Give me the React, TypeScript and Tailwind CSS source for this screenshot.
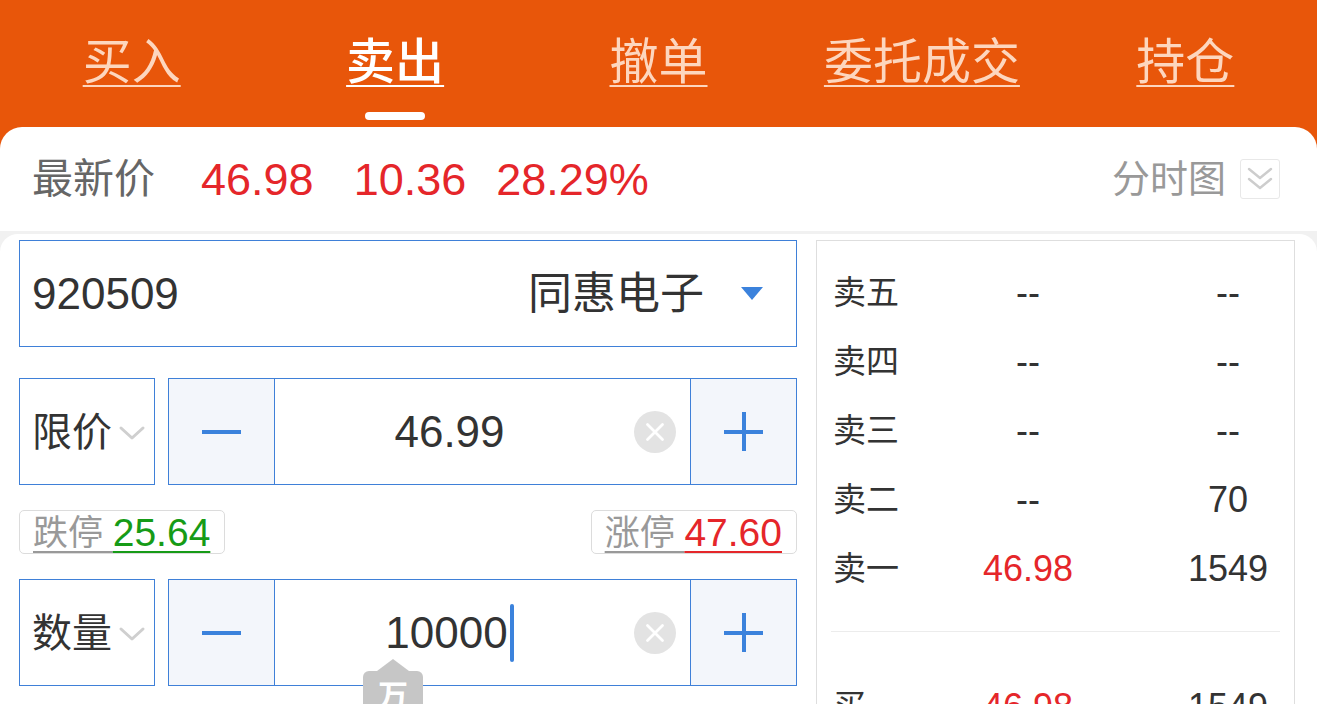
import React from "react";

const FONT = "font-['Liberation_Sans','Noto_Sans_CJK_SC',sans-serif]";

function Chevron() {
  return (
    <svg width="28" height="16" viewBox="0 0 28 16" className="shrink-0">
      <path d="M3 3 L14 13 L25 3" fill="none" stroke="#cfcfcf" strokeWidth="3" strokeLinecap="round" strokeLinejoin="round" />
    </svg>
  );
}

function ClearBtn() {
  return (
    <div className="w-[42px] h-[42px] rounded-full bg-[#e3e3e3] flex items-center justify-center shrink-0 ml-[10px] mr-[14px]">
      <svg width="22" height="22" viewBox="0 0 22 22">
        <path d="M3.5 3.5 L18.5 18.5 M18.5 3.5 L3.5 18.5" stroke="#ffffff" strokeWidth="2.8" strokeLinecap="round" />
      </svg>
    </div>
  );
}

function Stepper({ value, caret, tip }: { value: string; caret?: boolean; tip?: boolean }) {
  return (
    <div className="w-[629px] h-[107px] border border-[#3f80d8] flex relative">
      <div className="w-[106px] bg-[#f3f6fb] border-r border-[#3f80d8] flex items-center justify-center">
        <div className="w-[39px] h-[4px] bg-[#3b82dc]" />
      </div>
      <div className="flex-1 flex items-center relative">
        <div className="flex-1 flex items-center justify-center">
          <span className="text-[44px] text-[#333] leading-none">{value}</span>
          {caret && <div className="w-[4px] h-[58px] rounded-full bg-[#3b82dc] ml-[2px]" />}
        </div>
        <ClearBtn />
        {tip && (
          <div className="absolute left-[88px] top-[79px] w-[60px] flex flex-col items-center">
            <div className="w-0 h-0 border-l-[16px] border-r-[16px] border-b-[12px] border-l-transparent border-r-transparent border-b-[#c6c6c6]" />
            <div className="w-[60px] h-[60px] bg-[#c6c6c6] rounded-[6px] flex justify-center">
              <span className="text-[30px] text-white font-bold leading-none mt-[10px]">万</span>
            </div>
          </div>
        )}
      </div>
      <div className="w-[106px] bg-[#f3f6fb] border-l border-[#3f80d8] flex items-center justify-center">
        <div className="relative w-[39px] h-[39px]">
          <div className="absolute left-0 top-[17.5px] w-[39px] h-[4px] bg-[#3b82dc]" />
          <div className="absolute top-0 left-[17.5px] w-[4px] h-[39px] bg-[#3b82dc]" />
        </div>
      </div>
    </div>
  );
}

function SelectBox({ label }: { label: string }) {
  return (
    <div className="w-[136px] h-[107px] border border-[#3f80d8] flex items-center pl-[12px] pr-[6px]">
      <span className="text-[40px] text-[#333] leading-none">{label}</span>
      <span className="ml-[6px] mt-[2px]"><Chevron /></span>
    </div>
  );
}

function BookRow({ label, price, vol, red }: { label: string; price: string; vol: string; red?: boolean }) {
  return (
    <div className="h-[69px] flex items-center">
      <span className="w-[146px] pl-[16px] text-[33px] text-[#333] leading-none">{label}</span>
      <span className={`w-[130px] text-center text-[36px] leading-none ${red ? "text-[#e5262a]" : "text-[#333]"}`}>{price}</span>
      <span className="w-[130px] ml-[70px] text-center text-[36px] text-[#333] leading-none">{vol}</span>
    </div>
  );
}

export default function App() {
  const tabs = ["买入", "卖出", "撤单", "委托成交", "持仓"];
  return (
    <div className={`w-[1317px] h-[704px] overflow-hidden bg-[#f1f1f1] ${FONT}`}>
      <div className="bg-[#e8560a]">
        <div className="flex h-[127px]">
          {tabs.map((t, i) => (
            <div key={t} className="flex-1 flex flex-col items-center">
              <span
                className={`mt-[34px] text-[49px] leading-[56px] underline underline-offset-[6px] decoration-[2px] ${
                  i === 1 ? "text-white font-medium" : "text-[#fdd6be]"
                }`}
              >
                {t}
              </span>
              {i === 1 && <div className="mt-[22px] w-[60px] h-[8px] rounded-full bg-white" />}
            </div>
          ))}
        </div>
        <div className="bg-white rounded-t-[22px] h-[104px] flex items-center pl-[32px] pr-[37px]">
          <span className="text-[41px] text-[#666] leading-none">最新价</span>
          <span className="ml-[46px] text-[45px] text-[#e5262a] leading-none">46.98</span>
          <span className="ml-[40px] text-[45px] text-[#e5262a] leading-none">10.36</span>
          <span className="ml-[30px] text-[45px] text-[#e5262a] leading-none">28.29%</span>
          <span className="ml-auto text-[38px] text-[#999] leading-none">分时图</span>
          <div className="ml-[14px] w-[40px] h-[40px] border border-[#e8e8e8] rounded-[3px] flex items-center justify-center">
            <svg width="32" height="32" viewBox="0 0 32 32">
              <path d="M5 6 L16 15 L27 6 M5 16 L16 25 L27 16" fill="none" stroke="#cdcdcd" strokeWidth="2.4" strokeLinecap="round" strokeLinejoin="round" />
            </svg>
          </div>
        </div>
      </div>
      <div className="mt-[3px] bg-white rounded-t-[18px] h-[600px] flex pl-[19px] pt-[6px]">
        <div className="w-[778px] flex flex-col">
          <div className="h-[107px] border border-[#3f80d8] flex items-center pl-[12px]">
            <span className="text-[44px] text-[#333] leading-none">920509</span>
            <span className="ml-auto text-[44px] text-[#333] leading-none">同惠电子</span>
            <svg width="22" height="14" viewBox="0 0 22 14" className="ml-[37px] mr-[33px]">
              <path d="M0 0 L22 0 L11 13 Z" fill="#3b82dc" />
            </svg>
          </div>
          <div className="mt-[31px] flex gap-[13px]">
            <SelectBox label="限价" />
            <Stepper value="46.99" />
          </div>
          <div className="mt-[25px] h-[44px] flex justify-between">
            <div className="h-[44px] border border-[#dcdcdc] rounded-[5px] pl-[13px] pr-[14px] flex items-center">
              <span className="text-[35px] leading-none text-[#999] underline underline-offset-[6px] decoration-[2px] decoration-[#999] whitespace-pre">跌停 </span>
              <span className="text-[39px] leading-none text-[#169b17] underline underline-offset-[5px] decoration-[2px]">25.64</span>
            </div>
            <div className="h-[44px] border border-[#dcdcdc] rounded-[5px] pl-[13px] pr-[14px] flex items-center">
              <span className="text-[35px] leading-none text-[#999] underline underline-offset-[6px] decoration-[2px] decoration-[#999] whitespace-pre">涨停 </span>
              <span className="text-[39px] leading-none text-[#e5262a] underline underline-offset-[5px] decoration-[2px]">47.60</span>
            </div>
          </div>
          <div className="mt-[25px] flex gap-[13px]">
            <SelectBox label="数量" />
            <Stepper value="10000" caret tip />
          </div>
        </div>
        <div className="ml-[19px] w-[479px] h-[560px] border border-[#dedede] pt-[17px] flex flex-col">
          <BookRow label="卖五" price="--" vol="--" />
          <BookRow label="卖四" price="--" vol="--" />
          <BookRow label="卖三" price="--" vol="--" />
          <BookRow label="卖二" price="--" vol="70" />
          <BookRow label="卖一" price="46.98" vol="1549" red />
          <div className="mt-[28px] mx-[14px] h-px bg-[#ececec]" />
          <div className="mt-[40px]">
            <BookRow label="买一" price="46.98" vol="1549" red />
          </div>
        </div>
      </div>
    </div>
  );
}
